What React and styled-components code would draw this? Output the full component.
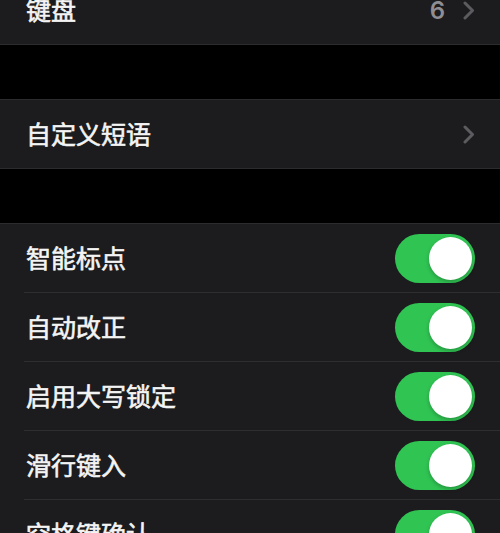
import React, { useState } from "react";
import styled, { createGlobalStyle } from "styled-components";

const GlobalStyle = createGlobalStyle`
  html, body {
    margin: 0;
    padding: 0;
    background: #000;
  }
  body {
    font-family: "Noto Sans CJK SC", "Noto Sans", sans-serif;
    -webkit-font-smoothing: antialiased;
  }
`;

// settings list, scrolled so the first row is partly hidden
const Page = styled.div`
  width: 500px;
  height: 533px;
  overflow: hidden;
  background: #000;
`;

const Scroller = styled.div`
  display: flex;
  flex-direction: column;
  gap: 54px;
  margin-top: -24px;
`;

const Group = styled.section`
  display: flex;
  flex-direction: column;
  background: #1c1c1e;
  border-top: ${(p) => (p.$first ? "none" : "1px solid #2c2c2e")};
  border-bottom: 1px solid #2c2c2e;
`;

const Row = styled.div`
  position: relative;
  display: flex;
  align-items: center;
  height: 68px;
  padding: 0 25px 0 26px;
  box-sizing: border-box;

  /* hairline between rows, inset from the left */
  &:not(:last-child) {
    height: 69px;
    border-bottom: 1px solid transparent;
  }
  &:not(:last-child)::after {
    content: "";
    position: absolute;
    left: 24px;
    right: 0;
    bottom: -1px;
    height: 1px;
    background: #2e2e30;
  }
`;

const Label = styled.span`
  flex: 1;
  color: #f4f4f4;
  font-size: 25px;
  font-weight: 400;
  -webkit-text-stroke: 0.6px #f4f4f4;
  line-height: 1;
  margin-top: -1px;
`;

const Value = styled.span`
  color: #8e8e93;
  font-family: "Inter", "Noto Sans", sans-serif;
  font-size: 24px;
  font-weight: 600;
  margin-right: 18px;
`;

const Switch = styled.button`
  position: relative;
  width: 80px;
  height: 49px;
  border: none;
  padding: 0;
  border-radius: 25px;
  background: ${(p) => (p.$on ? "#30c553" : "#39393d")};
  cursor: pointer;

  &::after {
    content: "";
    position: absolute;
    top: 3px;
    left: ${(p) => (p.$on ? "34px" : "3px")};
    width: 43px;
    height: 43px;
    border-radius: 50%;
    background: #fff;
    box-shadow: 0 2px 4px rgba(0, 0, 0, 0.25);
  }
`;

const Chevron = () => (
  <svg width="12" height="19" viewBox="0 0 12 19" fill="none">
    <path
      d="M2 2 L9.5 9.5 L2 17"
      stroke="#5c5c60"
      strokeWidth="3"
      strokeLinecap="round"
      strokeLinejoin="round"
    />
  </svg>
);

const toggles = ["智能标点", "自动改正", "启用大写锁定", "滑行键入", "空格键确认"];

function ToggleRow({ label }) {
  const [on, setOn] = useState(true);
  return (
    <Row>
      <Label>{label}</Label>
      <Switch $on={on} role="switch" aria-checked={on} onClick={() => setOn(!on)} />
    </Row>
  );
}

export default function App() {
  return (
    <Page>
      <GlobalStyle />
      <Scroller>
        <Group $first>
          <Row>
            <Label>键盘</Label>
            <Value>6</Value>
            <Chevron />
          </Row>
        </Group>
        <Group>
          <Row>
            <Label>自定义短语</Label>
            <Chevron />
          </Row>
        </Group>
        <Group>
          {toggles.map((t) => (
            <ToggleRow key={t} label={t} />
          ))}
        </Group>
      </Scroller>
    </Page>
  );
}
